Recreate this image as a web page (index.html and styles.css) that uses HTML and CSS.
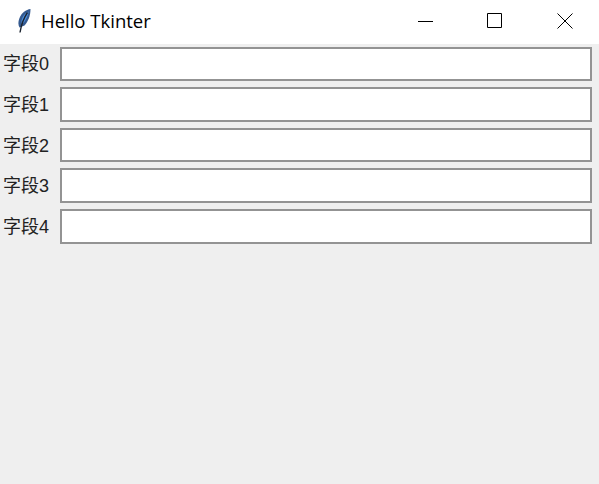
FILE: index.html
```html
<!DOCTYPE html>
<html lang="zh">
<head>
    <meta charset="UTF-8">
    <title>Hello Tkinter</title>
    <link rel="stylesheet" href="styles.css">
</head>
<body>
    <div class="titlebar">
        <svg class="feather" width="16" height="26" viewBox="0 0 16 26">
            <path d="M14.500 1 C10 1.500 5.500 5 3.500 10 C2 14 2 17 3.500 19.500 L8.500 17.500 C12 13.500 14.500 8 14.500 1 Z" fill="#34598f"/>
            <path d="M12.500 3.500 C9 5 6.500 8.500 5.500 12.500 L5.500 15.500 L8 14.500 C10.500 11 12 7.500 12.500 3.500 Z" fill="#4a90e2"/>
            <path d="M11.500 4.500 C8 9.500 5.500 15.500 4 24.500" fill="none" stroke="#1c2430" stroke-width="1.400"/>
        </svg>
        <span class="title">Hello Tkinter</span>
        <div class="controls">
            <button class="ctl">
                <svg width="16" height="16" viewBox="0 0 16 16"><path d="M0 8.500 H15" stroke="#000" fill="none"/></svg>
            </button>
            <button class="ctl">
                <svg width="16" height="16" viewBox="0 0 16 16"><path d="M0.500 0.500 H14.500 V14.500 H0.500 Z" stroke="#000" fill="none"/></svg>
            </button>
            <button class="ctl">
                <svg width="16" height="16" viewBox="0 0 16 16"><path d="M0.500 0.500 L15.500 15.500 M15.500 0.500 L0.500 15.500" stroke="#000" fill="none"/></svg>
            </button>
        </div>
    </div>
    <div class="form">
        <div class="row"><label>字段0</label><input type="text" class="field"></div>
        <div class="row"><label>字段1</label><input type="text" class="field"></div>
        <div class="row"><label>字段2</label><input type="text" class="field"></div>
        <div class="row"><label>字段3</label><input type="text" class="field"></div>
        <div class="row"><label>字段4</label><input type="text" class="field"></div>
    </div>
</body>
</html>
```

FILE: styles.css
```css
* {
    margin: 0;
    padding: 0;
    box-sizing: border-box;
}

html, body {
    height: 100%;
}

body {
    font-family: "Liberation Sans", "Noto Sans CJK SC", sans-serif;
    background-color: #efefef;
    display: flex;
    flex-direction: column;
    overflow: hidden;
}

.titlebar {
    height: 44px;
    flex: none;
    background-color: white;
    display: flex;
    align-items: center;
    padding-left: 16px;
}

.feather {
    flex: none;
    margin-top: -3px;
}

.title {
    margin-left: 9px;
    margin-top: -4px;
    font-family: "Open Sans", sans-serif;
    font-size: 18.500px;
    color: #000;
}

.controls {
    margin-left: auto;
    display: flex;
}

.ctl {
    width: 70px;
    height: 44px;
    border: none;
    background: none;
    display: flex;
    align-items: center;
    justify-content: center;
}

.ctl svg {
    margin-top: -3px;
}

.ctl:first-child svg {
    margin-left: 4px;
}

.ctl:nth-child(2) svg {
    margin-left: 2px;
}

.ctl:last-child svg {
    margin-left: 2px;
}

.form {
    padding: 2.700px 7px 0 3px;
    display: flex;
    flex-direction: column;
    gap: 6.100px;
}

.row {
    display: flex;
    align-items: center;
}

.row label {
    width: 57px;
    flex: none;
    margin-top: -3px;
    font-size: 18px;
    color: #222;
}

.field {
    flex: 1;
    height: 34.500px;
    background-color: white;
    border: 2px solid #939393;
}
```
